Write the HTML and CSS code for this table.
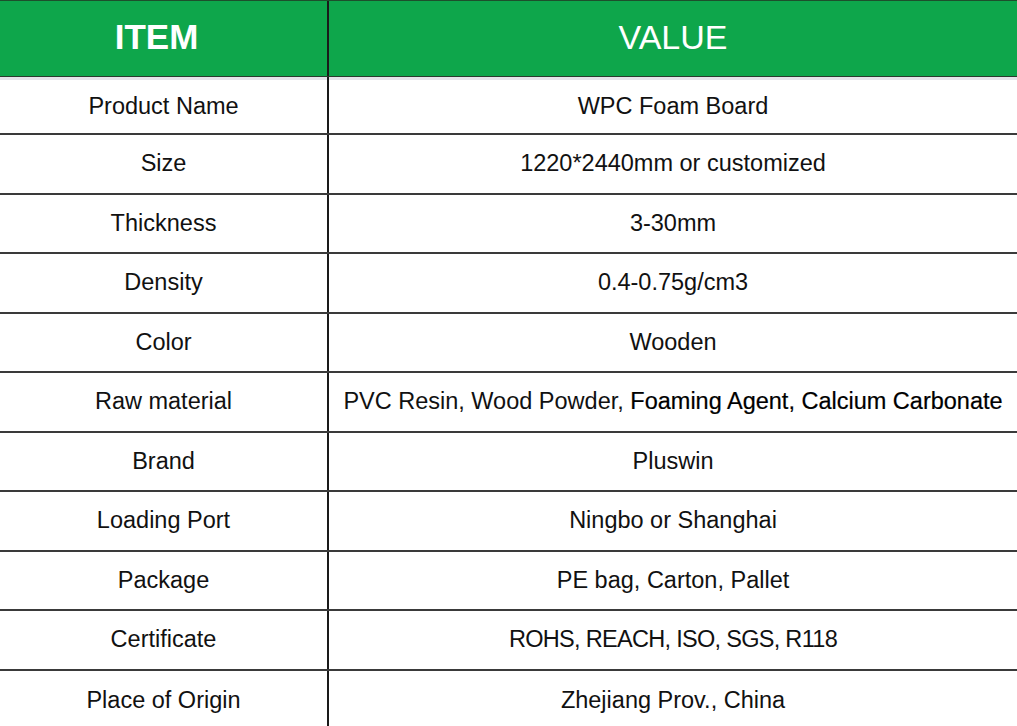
FILE: index.html
```html
<!DOCTYPE html>
<html>
<head>
<meta charset="utf-8">
<link rel="stylesheet" href="styles.css">
</head>
<body>
<div class="table">
  <div class="head">
    <div class="hcell item">ITEM</div>
    <div class="hcell value">VALUE</div>
  </div>
  <div class="band"><div class="bl"></div><div class="br"></div></div>
  <div class="row first"><div class="c1">Product Name</div><div class="c2">WPC Foam Board</div></div>
  <div class="row"><div class="c1">Size</div><div class="c2">1220*2440mm or customized</div></div>
  <div class="row"><div class="c1">Thickness</div><div class="c2">3-30mm</div></div>
  <div class="row"><div class="c1">Density</div><div class="c2">0.4-0.75g/cm3</div></div>
  <div class="row"><div class="c1">Color</div><div class="c2">Wooden</div></div>
  <div class="row"><div class="c1">Raw material</div><div class="c2"><span>PVC Resin, Wood Powder, <span class="strong">Foaming Agent, Calcium Carbonate</span></span></div></div>
  <div class="row"><div class="c1">Brand</div><div class="c2">Pluswin</div></div>
  <div class="row"><div class="c1">Loading Port</div><div class="c2">Ningbo or Shanghai</div></div>
  <div class="row"><div class="c1">Package</div><div class="c2">PE bag, Carton, Pallet</div></div>
  <div class="row"><div class="c1">Certificate</div><div class="c2 caps">ROHS, REACH, ISO, SGS, R118</div></div>
  <div class="row last"><div class="c1">Place of Origin</div><div class="c2">Zhejiang Prov., China</div></div>
</div>
</body>
</html>
```
FILE: styles.css
```css
html, body {
  margin: 0;
  padding: 0;
  background: #ffffff;
  overflow: hidden;
}
.table {
  width: 1017px;
  font-family: "Liberation Sans", Arial, sans-serif;
  color: #111;
}
.head {
  display: grid;
  grid-template-columns: 327px 2px 1fr;
  height: 77px;
  box-sizing: border-box;
  border-top: 1px solid #1d4f2c;
  border-bottom: 1px solid #2a3a2e;
  background: #0ea64b;
}
.head::before {
  content: "";
  grid-column: 2;
  grid-row: 1;
  background: #1a1a1a;
}
.hcell {
  grid-row: 1;
  display: flex;
  align-items: center;
  justify-content: center;
  color: #ffffff;
  padding-bottom: 3px;
}
.item {
  grid-column: 1;
  font-weight: bold;
  font-size: 35px;
  padding-right: 14px;
}
.value {
  grid-column: 3;
  font-size: 34px;
}
.band {
  display: grid;
  grid-template-columns: 327px 2px 1fr;
  height: 3px;
  background: #e4e4ea;
}
.band .bl { grid-column: 2; background: #1a1a1a; }
.row {
  display: grid;
  grid-template-columns: 327px 2px 1fr;
  height: 59.5px;
  box-sizing: border-box;
  border-bottom: 2px solid #3a3a3a;
  font-size: 23.5px;
}
.row.first { height: 55px; }
.row.last { border-bottom: none; }
.row::before {
  content: "";
  grid-column: 2;
  grid-row: 1;
  background: #1a1a1a;
}
.c1, .c2 {
  grid-row: 1;
  display: flex;
  align-items: center;
  justify-content: center;
  white-space: nowrap;
}
.c1 { grid-column: 1; }
.c2 { grid-column: 3; }
.caps { letter-spacing: -0.7px; }
.strong {
  color: #000;
  -webkit-text-stroke: 0.2px #000;
}
```
